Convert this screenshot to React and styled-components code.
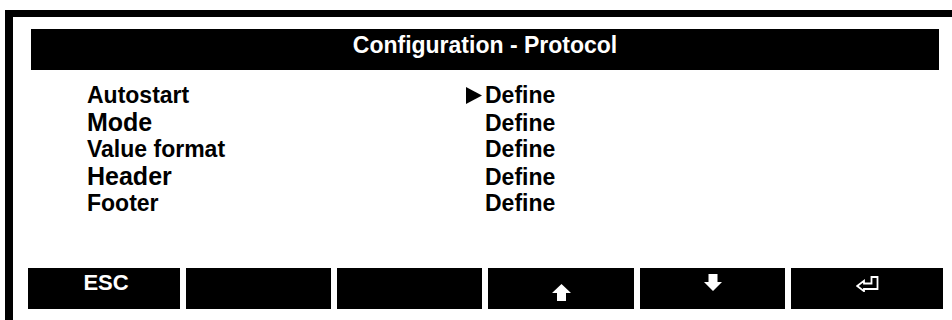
import React from "react";
import styled, { createGlobalStyle } from "styled-components";

const Global = createGlobalStyle`
  html, body { margin: 0; padding: 0; background: #fff; overflow: hidden; }
  body { font-family: "Liberation Sans", Arial, sans-serif; }
`;

const Frame = styled.div`
  box-sizing: border-box;
  margin: 10px 0 0 5px;
  width: 947px;
  height: 310px;
  border-top: 7px solid #000;
  border-left: 8px solid #000;
  padding-top: 12px;
  display: flex;
  flex-direction: column;
`;

const TitleBar = styled.div`
  box-sizing: border-box;
  margin-left: 18px;
  width: 908px;
  height: 41px;
  background: #000;
  color: #fff;
  font-weight: bold;
  font-size: 23px;
  line-height: 23px;
  text-align: center;
  padding-top: 5px;
`;

const List = styled.div`
  margin: 12px 0 0 74px;
  display: flex;
  flex-direction: column;
`;

const Row = styled.div`
  display: grid;
  grid-template-columns: 379px 19px auto;
  align-items: baseline;
  height: 27px;
  line-height: 27px;
  font-weight: bold;
  color: #000;
`;

const Label = styled.span`
  font-size: ${(p) => (p.$big ? "25px" : "23px")};
`;

const Marker = styled.span`
  align-self: center;
  display: flex;
  align-items: center;
  height: 27px;
`;

const Value = styled.span`
  font-size: 23px;
`;

const Keys = styled.div`
  margin: 51px 0 0 15px;
  display: grid;
  grid-template-columns: 152px 145px 145px 146px 145px 152px;
  column-gap: 6px;
`;

const Key = styled.div`
  box-sizing: border-box;
  height: 41px;
  background: #000;
  color: #fff;
  font-weight: bold;
  font-size: 22px;
  line-height: 22px;
  display: flex;
  justify-content: center;
  align-items: flex-start;
  padding-top: ${(p) => p.$pt || 0}px;
  padding-left: ${(p) => p.$pl || 0}px;
  svg { display: block; }
`;

const rows = [
  { label: "Autostart", big: false, selected: true },
  { label: "Mode", big: true },
  { label: "Value format", big: false },
  { label: "Header", big: true },
  { label: "Footer", big: false },
];

const Triangle = () => (
  <svg width="16" height="17" viewBox="0 0 16 17">
    <polygon points="0,0 16,8.5 0,17" fill="#000" />
  </svg>
);

const UpArrow = () => (
  <svg width="19" height="17" viewBox="0 0 19 17">
    <polygon points="9.5,0 19,9 14,9 14,17 5,17 5,9 0,9" fill="#fff" />
  </svg>
);

const DownArrow = () => (
  <svg width="18" height="17" viewBox="0 0 18 17">
    <polygon points="4.5,0 13.5,0 13.5,8 18,8 9,17 0,8 4.5,8" fill="#fff" />
  </svg>
);

const EnterIcon = () => (
  <svg width="23" height="16" viewBox="0 0 23 16">
    <polygon
      points="15.5,1 21.5,1 21.5,13 8,13 8,15.2 1.2,10 8,4.8 8,7.5 15.5,7.5"
      fill="none"
      stroke="#fff"
      strokeWidth="1.8"
      strokeLinejoin="miter"
    />
  </svg>
);

export default function App() {
  return (
    <>
      <Global />
      <Frame>
        <TitleBar>Configuration - Protocol</TitleBar>
        <List>
          {rows.map((r) => (
            <Row key={r.label}>
              <Label $big={r.big}>{r.label}</Label>
              <Marker>{r.selected ? <Triangle /> : null}</Marker>
              <Value>Define</Value>
            </Row>
          ))}
        </List>
        <Keys>
          <Key $pt={4} $pl={4}>ESC</Key>
          <Key />
          <Key />
          <Key $pt={16}>
            <UpArrow />
          </Key>
          <Key $pt={6}>
            <DownArrow />
          </Key>
          <Key $pt={8}>
            <EnterIcon />
          </Key>
        </Keys>
      </Frame>
    </>
  );
}
